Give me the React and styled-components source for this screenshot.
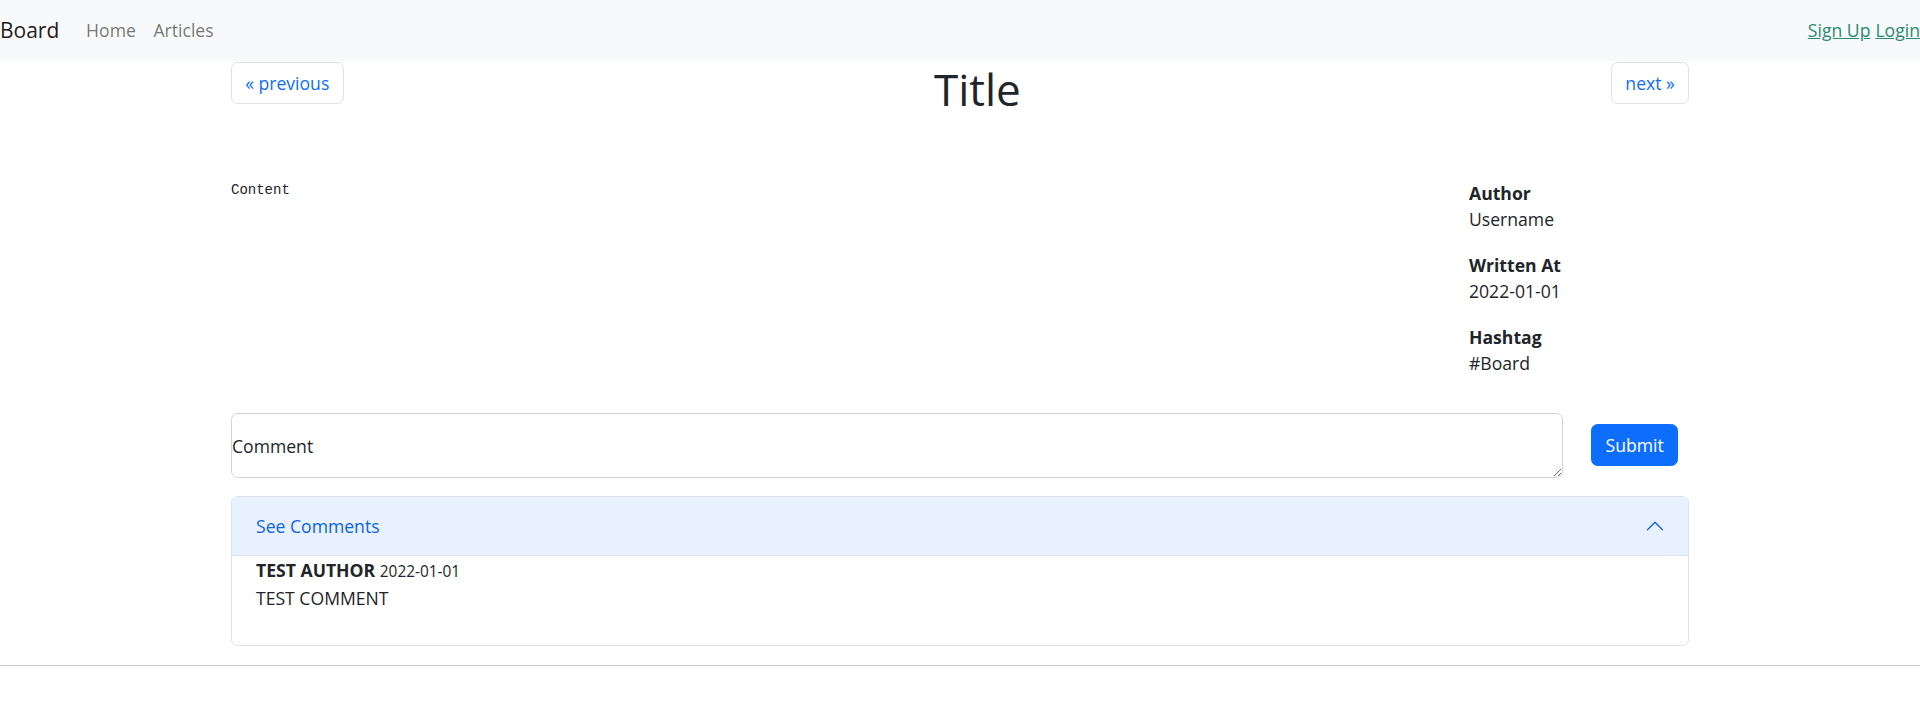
import React from "react";
import styled, { createGlobalStyle } from "styled-components";

const Global = createGlobalStyle`
  * { box-sizing: border-box; }
  body {
    margin: 0;
    font-family: "Open Sans", "Noto Sans", sans-serif;
    font-size: 17.6px;
    line-height: 26.4px;
    color: #212529;
    background: #fff;
  }
`;

const NavBar = styled.nav`
  height: 61px;
  background: #f8f9fa;
  display: flex;
  align-items: center;
  justify-content: space-between;
`;

const NavLeft = styled.div`
  display: flex;
  align-items: center;
`;

const Brand = styled.a`
  font-size: 21px;
  line-height: 33px;
  color: rgba(0, 0, 0, 0.9);
  text-decoration: none;
  margin-right: 18px;
`;

const NavLink = styled.a`
  color: rgba(0, 0, 0, 0.55);
  text-decoration: none;
  padding: 0 8.8px;
`;

const NavRight = styled.div`
  display: flex;
  gap: 5px;
`;

const AuthLink = styled.a`
  color: #2a8a72;
  text-decoration: underline;
`;

const Container = styled.main`
  width: 1458px;
  margin: 0 auto;
`;

const Header = styled.header`
  display: flex;
  justify-content: space-between;
  align-items: flex-start;
  margin-top: 1px;
  margin-bottom: 64px;
`;

const PageButton = styled.a`
  display: inline-block;
  border: 1px solid #dee2e6;
  border-radius: 6.6px;
  padding: 6.6px 13.2px;
  color: #0d6efd;
  text-decoration: none;
  line-height: 26.4px;
`;

const Title = styled.h1`
  margin: 1px 0 0;
  font-size: 44px;
  line-height: 52.8px;
  font-weight: 400;
`;

const ArticleRow = styled.section`
  display: grid;
  grid-template-columns: 1fr 220px;
`;

const Content = styled.pre`
  margin: 0;
  font-family: "Liberation Mono", "DejaVu Sans Mono", monospace;
  font-size: 14px;
  line-height: 21px;
`;

const Meta = styled.dl`
  margin: 0;
  display: flex;
  flex-direction: column;
  gap: 19.2px;
`;

const MetaGroup = styled.div``;

const MetaLabel = styled.dt`
  font-weight: 700;
`;

const MetaValue = styled.dd`
  margin: 0;
`;

const CommentForm = styled.form`
  display: flex;
  align-items: center;
  margin-top: 36px;
`;

const CommentInput = styled.textarea`
  flex: 1;
  height: 65px;
  border: 1px solid #ced4da;
  border-radius: 6.6px;
  padding: 19px 0 0 0;
  font-family: inherit;
  font-size: 17.6px;
  line-height: 26.4px;
  color: #212529;
  margin-right: 28px;
  outline: none;
`;

const SubmitButton = styled.button`
  background: #0d6efd;
  color: #fff;
  border: 1px solid #0d6efd;
  border-radius: 6.6px;
  padding: 6.6px 13.2px;
  font-family: inherit;
  font-size: 17.6px;
  line-height: 26.4px;
  margin-right: 11px;
`;

const Accordion = styled.div`
  margin-top: 18px;
  border: 1px solid #dee2e6;
  border-radius: 6.6px;
  overflow: hidden;
`;

const AccordionHeader = styled.div`
  height: 59px;
  background: #e7f1ff;
  color: #0c63e4;
  border-bottom: 1px solid #dee2e6;
  display: flex;
  align-items: center;
  justify-content: space-between;
  padding: 1px 23px 0 24px;
`;

const AccordionBody = styled.div`
  padding: 1px 24px 34px;
`;

const CommentAuthor = styled.div`
  font-weight: 700;
`;

const CommentDate = styled.span`
  font-weight: 400;
  font-size: 15.4px;
`;

const Rule = styled.hr`
  margin: 19px 0 0;
  border: 0;
  border-top: 1px solid #c8c9ca;
`;

const Chevron = () => (
  <svg width="20" height="20" viewBox="0 0 16 16" fill="#0c63e4" style={{ transform: "rotate(180deg)" }}>
    <path d="M1.646 4.646a.5.5 0 0 1 .708 0L8 10.293l5.646-5.647a.5.5 0 0 1 .708.708l-6 6a.5.5 0 0 1-.708 0l-6-6a.5.5 0 0 1 0-.708z" />
  </svg>
);

export default function App() {
  return (
    <>
      <Global />
      <NavBar>
        <NavLeft>
          <Brand href="#">Board</Brand>
          <NavLink href="#">Home</NavLink>
          <NavLink href="#">Articles</NavLink>
        </NavLeft>
        <NavRight>
          <AuthLink href="#">Sign Up</AuthLink>
          <AuthLink href="#">Login</AuthLink>
        </NavRight>
      </NavBar>
      <Container>
        <Header>
          <PageButton href="#">« previous</PageButton>
          <Title>Title</Title>
          <PageButton href="#">next »</PageButton>
        </Header>
        <ArticleRow>
          <Content>Content</Content>
          <Meta>
            <MetaGroup>
              <MetaLabel>Author</MetaLabel>
              <MetaValue>Username</MetaValue>
            </MetaGroup>
            <MetaGroup>
              <MetaLabel>Written At</MetaLabel>
              <MetaValue>2022-01-01</MetaValue>
            </MetaGroup>
            <MetaGroup>
              <MetaLabel>Hashtag</MetaLabel>
              <MetaValue>#Board</MetaValue>
            </MetaGroup>
          </Meta>
        </ArticleRow>
        <CommentForm onSubmit={(e) => e.preventDefault()}>
          <CommentInput defaultValue="Comment" />
          <SubmitButton type="submit">Submit</SubmitButton>
        </CommentForm>
        <Accordion>
          <AccordionHeader>
            <span>See Comments</span>
            <Chevron />
          </AccordionHeader>
          <AccordionBody>
            <CommentAuthor>
              TEST AUTHOR <CommentDate>2022-01-01</CommentDate>
            </CommentAuthor>
            <div>TEST COMMENT</div>
          </AccordionBody>
        </Accordion>
      </Container>
      <Rule />
    </>
  );
}
